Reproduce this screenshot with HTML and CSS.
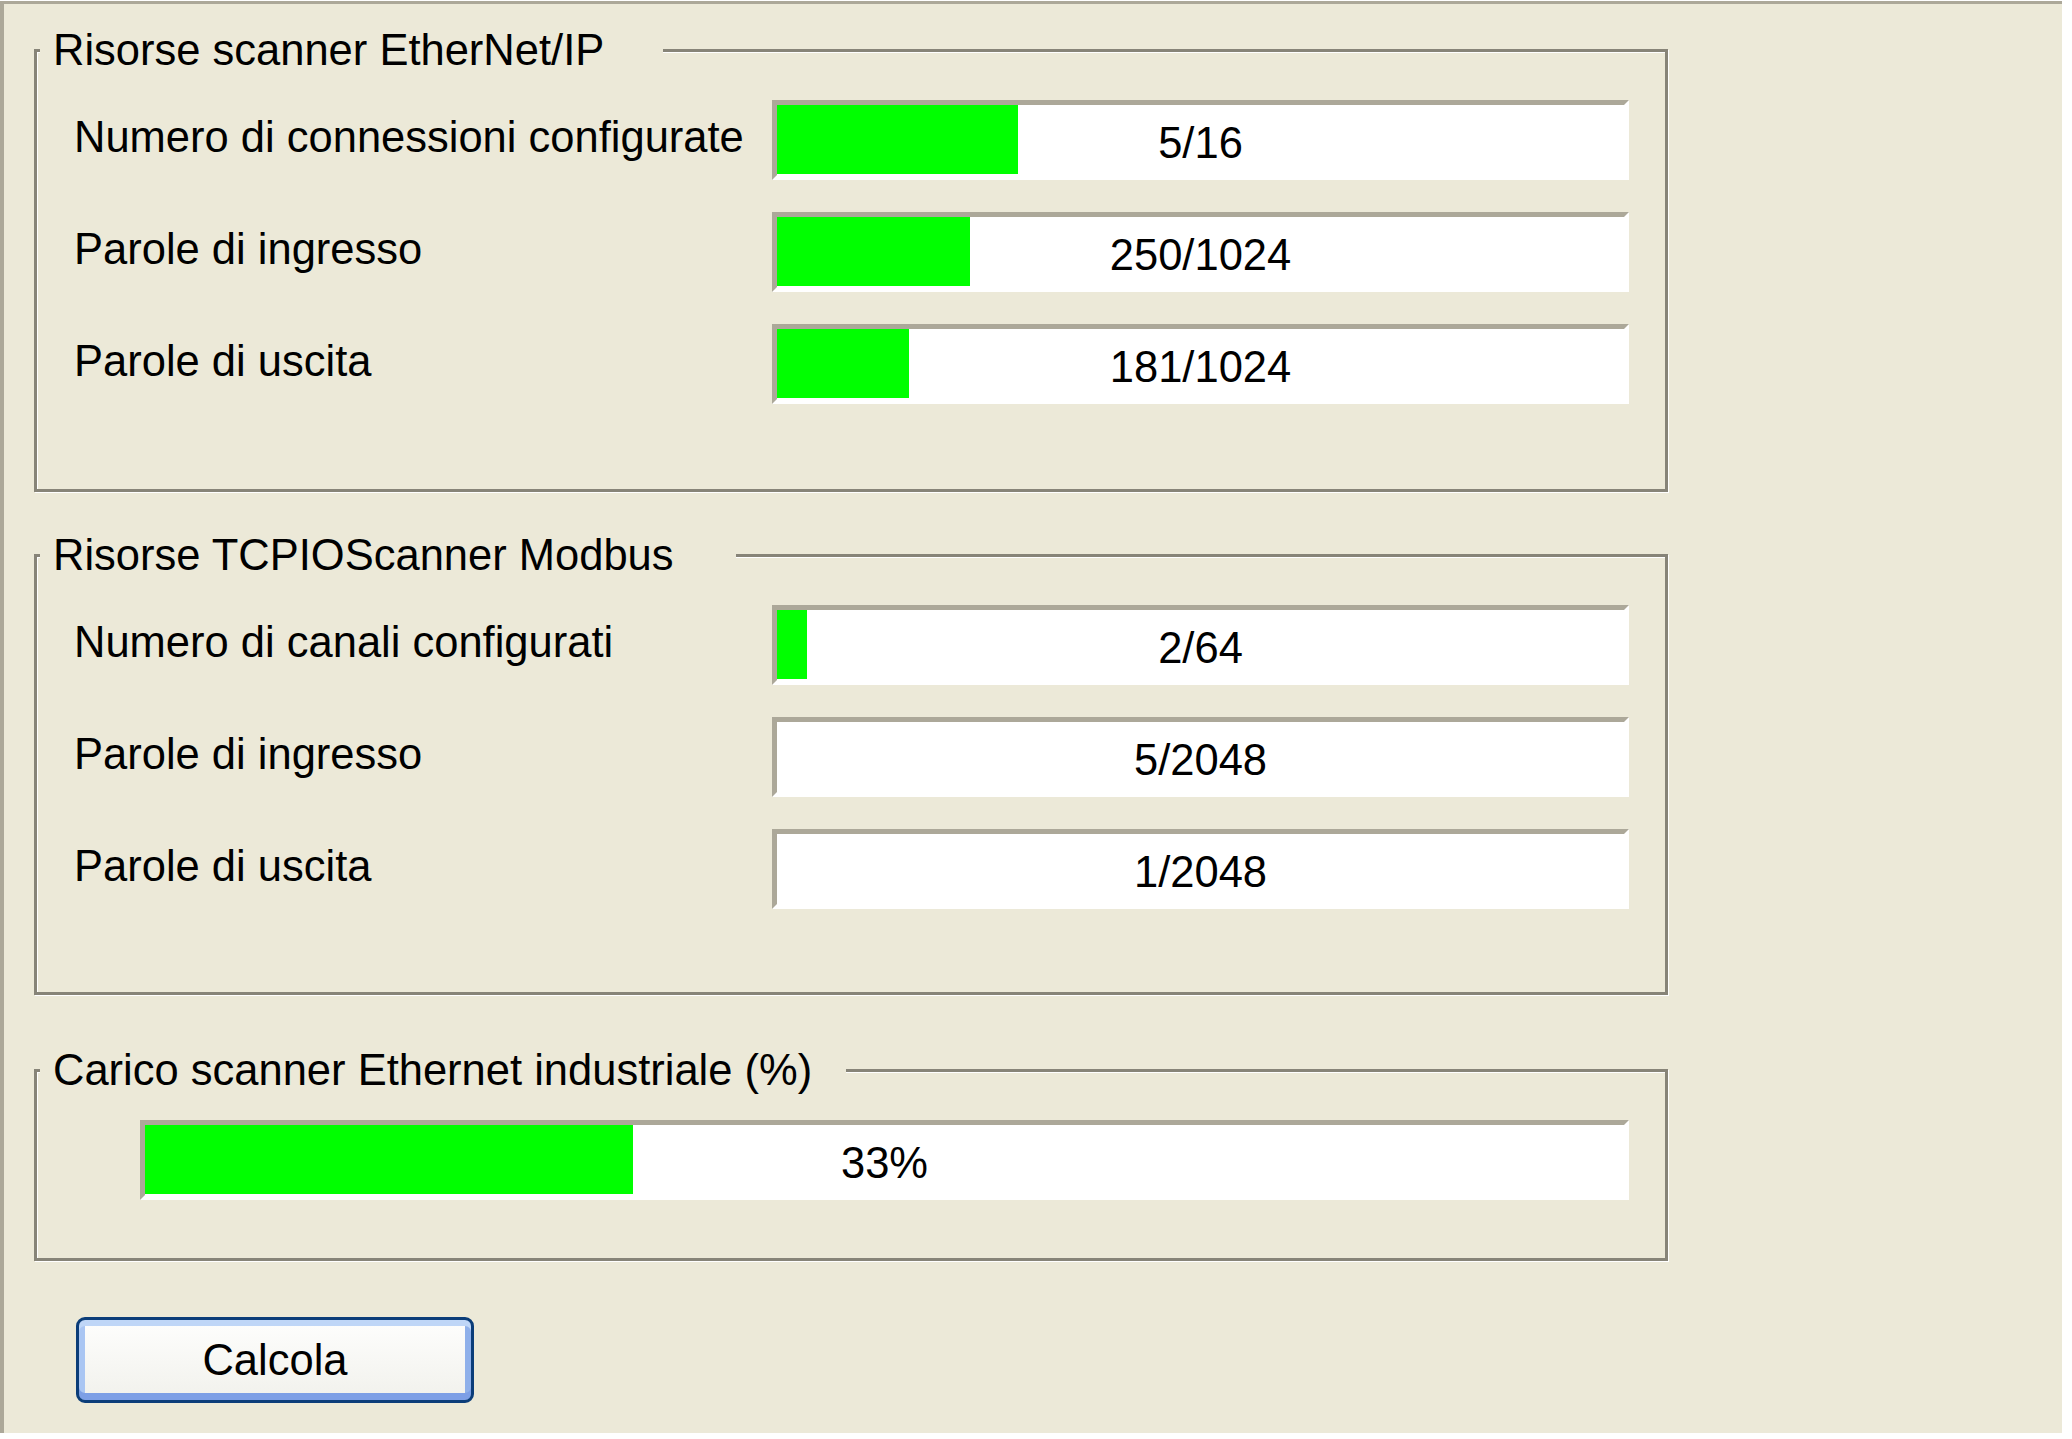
FILE: index.html
```html
<!DOCTYPE html>
<html lang="it">
<head>
    <meta charset="UTF-8" />
    <meta name="viewport" content="width=device-width, initial-scale=1.0"/>
    <title>Risorse scanner</title>
    <link rel="stylesheet" href="styles.css">
</head>
<body>

<div class="panel">

    <fieldset class="group group-eip">
        <legend>Risorse scanner EtherNet/IP</legend>
        <div class="row">
            <span class="label">Numero di connessioni configurate</span>
            <div class="meter"><div class="fill" style="width: 28.4%"></div><span class="value">5/16</span></div>
        </div>
        <div class="row">
            <span class="label">Parole di ingresso</span>
            <div class="meter"><div class="fill" style="width: 22.8%"></div><span class="value">250/1024</span></div>
        </div>
        <div class="row">
            <span class="label">Parole di uscita</span>
            <div class="meter"><div class="fill" style="width: 15.6%"></div><span class="value">181/1024</span></div>
        </div>
    </fieldset>

    <fieldset class="group group-modbus">
        <legend>Risorse TCPIOScanner Modbus</legend>
        <div class="row">
            <span class="label">Numero di canali configurati</span>
            <div class="meter"><div class="fill" style="width: 3.5%"></div><span class="value">2/64</span></div>
        </div>
        <div class="row">
            <span class="label">Parole di ingresso</span>
            <div class="meter"><div class="fill" style="width: 0%"></div><span class="value">5/2048</span></div>
        </div>
        <div class="row">
            <span class="label">Parole di uscita</span>
            <div class="meter"><div class="fill" style="width: 0%"></div><span class="value">1/2048</span></div>
        </div>
    </fieldset>

    <fieldset class="group group-load">
        <legend>Carico scanner Ethernet industriale (%)</legend>
        <div class="row row-wide">
            <div class="meter"><div class="fill" style="width: 33%"></div><span class="value">33%</span></div>
        </div>
    </fieldset>

    <button class="btn">Calcola</button>

</div>

</body>
</html>
```

FILE: styles.css
```css
body {
    margin: 0;
    background: #fff;
    font-family: "Liberation Sans", Arial, sans-serif;
    font-size: 43.5px;
    color: #000;
}

.panel {
    box-sizing: border-box;
    width: 2062px;
    height: 1432px;
    margin-top: 1px;
    padding: 21px 0 0 30px;
    background: #ece9d8;
    border-top: 3px solid #aca899;
    border-left: 4px solid #aca899;
}

/* group box */
.group {
    box-sizing: border-box;
    width: 1634px;
    margin: 0;
    padding: 25px 36px 85px 37px;
    border: 3px solid #878478;
    box-shadow: 1px 1px 0 #fff, inset 1px 1px 0 #fff;
    display: flex;
    flex-direction: column;
    gap: 32px;
}
.group legend {
    box-sizing: border-box;
    margin-left: -34px;
    padding: 0 0 0 13px;
    line-height: 50px;
    background: #ece9d8;
}
.group-eip legend { width: 623px; }
.group-modbus { margin-top: 38px; padding-bottom: 83px; }
.group-modbus legend { width: 696px; }
.group-load { margin-top: 50px; padding-bottom: 58px; }
.group-load legend { width: 806px; }

.row {
    display: flex;
    align-items: center;
    height: 80px;
}
.row-wide {
    padding-left: 66px;
}
.label {
    width: 698px;
    flex-shrink: 0;
    margin-top: -5px;
    white-space: nowrap;
}

/* progress bar */
.meter {
    box-sizing: border-box;
    flex: 1;
    height: 80px;
    display: grid;
    background: #fff;
    border: 5px solid;
    border-color: #aca899 #fff #fff #aca899;
}
.fill {
    grid-area: 1 / 1;
    height: 69px;
    background: #00ff00;
}
.value {
    grid-area: 1 / 1;
    place-self: center;
    padding-top: 6px;
}

.btn {
    box-sizing: border-box;
    display: block;
    width: 398px;
    height: 86px;
    margin: 56px 0 0 42px;
    padding: 0;
    font: inherit;
    color: #000;
    border: 3px solid #0b3d79;
    border-radius: 9px;
    background: linear-gradient(#fefefd, #f1f1ec);
    box-shadow: inset 0 6px 0 #bfd6f7, inset 0 -7px 0 #7d9fe6, inset 6px 0 0 #aac6f3, inset -6px 0 0 #8fb0ea;
}
```
